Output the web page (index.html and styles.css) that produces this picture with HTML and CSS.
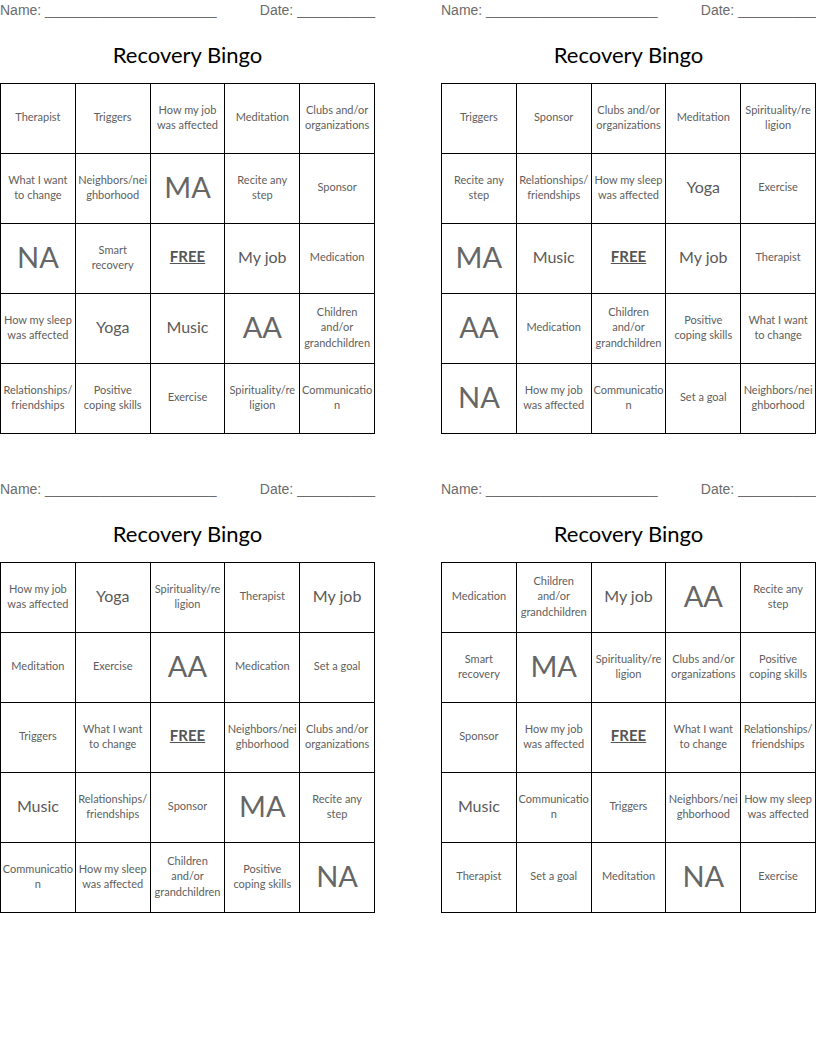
FILE: index.html
```html
<!DOCTYPE html>
<html>
<head>
<meta charset="utf-8">
<link rel="stylesheet" href="styles.css">
</head>
<body>
<div class="sheet">

<section class="card">
  <div class="meta"><span>Name: ______________________</span><span>Date: __________</span></div>
  <h1 class="title">Recovery Bingo</h1>
  <table class="board">
    <tr><td>Therapist</td><td>Triggers</td><td>How my job<br>was affected</td><td>Meditation</td><td>Clubs and/or<br>organizations</td></tr>
    <tr><td>What I want<br>to change</td><td>Neighbors/nei<br>ghborhood</td><td class="big">MA</td><td>Recite any<br>step</td><td>Sponsor</td></tr>
    <tr><td class="big">NA</td><td>Smart<br>recovery</td><td class="free">FREE</td><td class="mid">My job</td><td>Medication</td></tr>
    <tr><td>How my sleep<br>was affected</td><td class="mid">Yoga</td><td class="mid">Music</td><td class="big">AA</td><td>Children<br>and/or<br>grandchildren</td></tr>
    <tr><td>Relationships/<br>friendships</td><td>Positive<br>coping skills</td><td>Exercise</td><td>Spirituality/re<br>ligion</td><td>Communicatio<br>n</td></tr>
  </table>
</section>

<section class="card">
  <div class="meta"><span>Name: ______________________</span><span>Date: __________</span></div>
  <h1 class="title">Recovery Bingo</h1>
  <table class="board">
    <tr><td>Triggers</td><td>Sponsor</td><td>Clubs and/or<br>organizations</td><td>Meditation</td><td>Spirituality/re<br>ligion</td></tr>
    <tr><td>Recite any<br>step</td><td>Relationships/<br>friendships</td><td>How my sleep<br>was affected</td><td class="mid">Yoga</td><td>Exercise</td></tr>
    <tr><td class="big">MA</td><td class="mid">Music</td><td class="free">FREE</td><td class="mid">My job</td><td>Therapist</td></tr>
    <tr><td class="big">AA</td><td>Medication</td><td>Children<br>and/or<br>grandchildren</td><td>Positive<br>coping skills</td><td>What I want<br>to change</td></tr>
    <tr><td class="big">NA</td><td>How my job<br>was affected</td><td>Communicatio<br>n</td><td>Set a goal</td><td>Neighbors/nei<br>ghborhood</td></tr>
  </table>
</section>

<section class="card">
  <div class="meta"><span>Name: ______________________</span><span>Date: __________</span></div>
  <h1 class="title">Recovery Bingo</h1>
  <table class="board">
    <tr><td>How my job<br>was affected</td><td class="mid">Yoga</td><td>Spirituality/re<br>ligion</td><td>Therapist</td><td class="mid">My job</td></tr>
    <tr><td>Meditation</td><td>Exercise</td><td class="big">AA</td><td>Medication</td><td>Set a goal</td></tr>
    <tr><td>Triggers</td><td>What I want<br>to change</td><td class="free">FREE</td><td>Neighbors/nei<br>ghborhood</td><td>Clubs and/or<br>organizations</td></tr>
    <tr><td class="mid">Music</td><td>Relationships/<br>friendships</td><td>Sponsor</td><td class="big">MA</td><td>Recite any<br>step</td></tr>
    <tr><td>Communicatio<br>n</td><td>How my sleep<br>was affected</td><td>Children<br>and/or<br>grandchildren</td><td>Positive<br>coping skills</td><td class="big">NA</td></tr>
  </table>
</section>

<section class="card">
  <div class="meta"><span>Name: ______________________</span><span>Date: __________</span></div>
  <h1 class="title">Recovery Bingo</h1>
  <table class="board">
    <tr><td>Medication</td><td>Children<br>and/or<br>grandchildren</td><td class="mid">My job</td><td class="big">AA</td><td>Recite any<br>step</td></tr>
    <tr><td>Smart<br>recovery</td><td class="big">MA</td><td>Spirituality/re<br>ligion</td><td>Clubs and/or<br>organizations</td><td>Positive<br>coping skills</td></tr>
    <tr><td>Sponsor</td><td>How my job<br>was affected</td><td class="free">FREE</td><td>What I want<br>to change</td><td>Relationships/<br>friendships</td></tr>
    <tr><td class="mid">Music</td><td>Communicatio<br>n</td><td>Triggers</td><td>Neighbors/nei<br>ghborhood</td><td>How my sleep<br>was affected</td></tr>
    <tr><td>Therapist</td><td>Set a goal</td><td>Meditation</td><td class="big">NA</td><td>Exercise</td></tr>
  </table>
</section>

</div>
</body>
</html>
```

FILE: styles.css
```css
html, body {
  margin: 0;
  padding: 0;
  background: #fff;
}

.sheet {
  display: grid;
  grid-template-columns: 375px 375px;
  column-gap: 66px;
  row-gap: 45px;
  width: 816px;
}

.card {
  display: flex;
  flex-direction: column;
}

.meta {
  display: flex;
  justify-content: space-between;
  font-family: "Liberation Sans", Arial, sans-serif;
  font-size: 14px;
  line-height: 20px;
  color: #6b6b6b;
  white-space: nowrap;
}

.title {
  margin: 21px 0 0 0;
  font-family: Lato, "Noto Sans", sans-serif;
  font-weight: normal;
  font-size: 22px;
  line-height: 28px;
  text-align: center;
  color: #000;
}

.board {
  margin-top: 14px;
  border-collapse: collapse;
  table-layout: fixed;
  width: 375px;
}

.board td {
  border: 1px solid #000;
  height: 66px;
  padding: 0 0 3px 0;
  text-align: center;
  vertical-align: middle;
  font-family: Lato, "Noto Sans", sans-serif;
  font-size: 11px;
  line-height: 15.5px;
  color: #606060;
  white-space: nowrap;
  overflow: hidden;
}

.board td.mid {
  font-size: 16px;
  color: #5a5a5a;
}

.board td.big {
  font-size: 29px;
  color: #666;
}

.board td.free {
  font-size: 15px;
  font-weight: bold;
  text-decoration: underline;
  color: #555;
}
```
